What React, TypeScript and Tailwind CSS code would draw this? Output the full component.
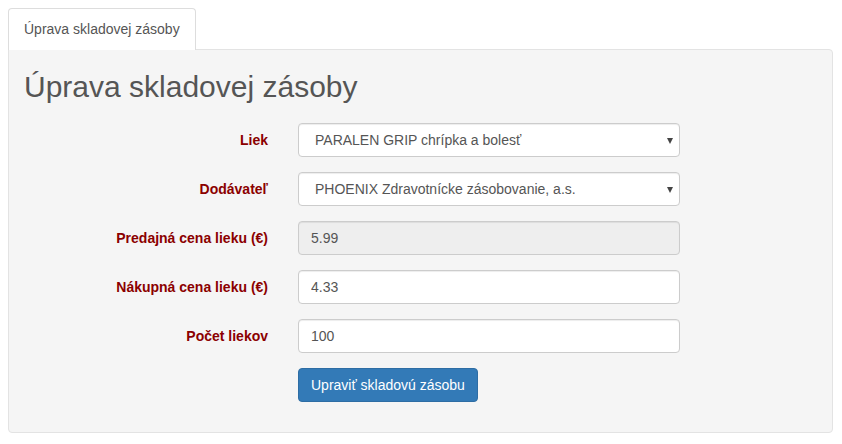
const rows = [
  { label: 'Liek', value: 'PARALEN GRIP chrípka a bolesť', kind: 'select' },
  { label: 'Dodávateľ', value: 'PHOENIX Zdravotnícke zásobovanie, a.s.', kind: 'select' },
  { label: 'Predajná cena lieku (€)', value: '5.99', kind: 'disabled' },
  { label: 'Nákupná cena lieku (€)', value: '4.33', kind: 'input' },
  { label: 'Počet liekov', value: '100', kind: 'input' },
]

const Field = ({ value, kind }: { value: string; kind: string }) => {
  if (kind === 'select') {
    return (
      <div className="relative h-[34px] w-[382px] rounded-[4px] border border-[#ccc] bg-white shadow-[inset_0_1px_1px_rgba(0,0,0,0.075)]">
        <div className="pl-[16px] text-[14px] leading-[32px] text-[#555]">{value}</div>
        <span className="absolute right-[6px] top-[14px] h-0 w-0 border-x-[3px] border-t-[6px] border-x-transparent border-t-[#444]" />
      </div>
    )
  }
  return (
    <input
      readOnly
      value={value}
      className={`h-[34px] w-[382px] rounded-[4px] border border-[#ccc] px-[12px] text-[14px] text-[#555] shadow-[inset_0_1px_1px_rgba(0,0,0,0.075)] outline-none ${
        kind === 'disabled' ? 'bg-[#eee]' : 'bg-white'
      }`}
    />
  )
}

export default function App() {
  return (
    <div className="h-[444px] w-[842px] bg-white px-[8px] pt-[8px] font-['Liberation_Sans',Arial,sans-serif] text-[14px] text-[#333]">
      <div className="flex">
        <div className="relative z-10 -mb-px rounded-t-[4px] border border-b-0 border-[#ddd] bg-white px-[15px] pb-[11px] pt-[10px] leading-[20px] text-[#555]">
          Úprava skladovej zásoby
        </div>
      </div>
      <div className="h-[384px] w-[825px] rounded-b-[4px] rounded-tr-[4px] border border-[#e3e3e3] bg-[#f5f5f5]">
        <h2 className="pl-[15px] pt-[20px] text-[30px] leading-[33px] font-normal text-[#555]">
          Úprava skladovej zásoby
        </h2>
        <div className="mt-[20px] flex flex-col gap-[15px]">
          {rows.map((r) => (
            <div key={r.label} className="flex">
              <label className="w-[259px] pt-[7px] text-right font-bold leading-[20px] text-[#8b0000]">
                {r.label}
              </label>
              <div className="ml-[30px]">
                <Field value={r.value} kind={r.kind} />
              </div>
            </div>
          ))}
          <div className="flex">
            <div className="ml-[289px]">
              <button
                type="button"
                className="h-[34px] rounded-[4px] border border-[#2e6da4] bg-[#337ab7] px-[12px] text-[14px] leading-[20px] text-white"
              >
                Upraviť skladovú zásobu
              </button>
            </div>
          </div>
        </div>
      </div>
    </div>
  )
}
